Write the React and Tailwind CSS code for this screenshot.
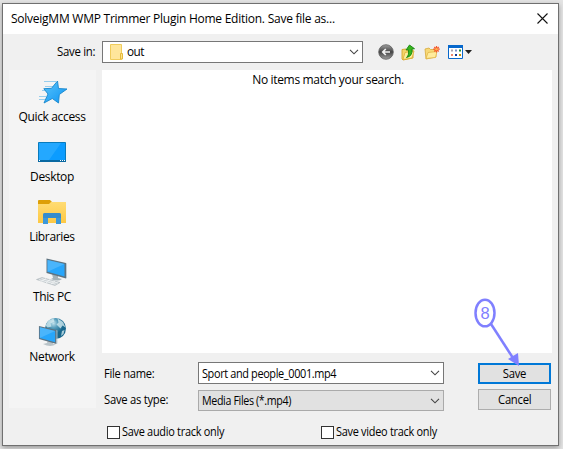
import React from "react";

function Chevron() {
  return (
    <svg width="10" height="6" viewBox="0 0 10 6" fill="none" stroke="#444" strokeWidth="1.1" className="shrink-0">
      <path d="M1 .8 5 4.8 9 .8" />
    </svg>
  );
}

function StarIcon() {
  return (
    <svg width="32" height="32" viewBox="0 0 32 32">
      <defs>
        <linearGradient id="star" x1="0" y1="0" x2="1" y2="1">
          <stop offset="0" stopColor="#5cc4f8" />
          <stop offset="1" stopColor="#0c94f5" />
        </linearGradient>
      </defs>
      <path d="M8 5.500H20M9 10.500H18M6 14.500H12M3 20.500H10M3 23.500H9" stroke="#8dc9ec" strokeWidth=".9" />
      <path d="M21.500 5 22.500 12.500 31 13 23.300 18.500 22.500 27 16.300 22.500 8 27 12 18 7.800 12.700 15.500 12.300Z" fill="url(#star)" stroke="#1787cc" strokeWidth=".9" />
    </svg>
  );
}

function DesktopIcon() {
  return (
    <svg width="32" height="32" viewBox="0 0 32 32">
      <path d="M2.500 6.500h27v19h-27z" fill="#0c9cff" stroke="#087bbd" />
      <path d="M3 24V7h22L13 24z" fill="#35b0ff" opacity=".6" />
      <path d="M2 24h28v2H2z" fill="#0969a2" />
      <path d="M3 24.500h1M24 24.500h1M26 24.500h1M28 24.500h1" stroke="#fff" />
    </svg>
  );
}

function LibrariesIcon() {
  return (
    <svg width="32" height="32" viewBox="0 0 32 32">
      <defs>
        <linearGradient id="folder" x1="0" y1="0" x2="0" y2="1">
          <stop offset="0" stopColor="#ffdc74" />
          <stop offset="1" stopColor="#fdc843" />
        </linearGradient>
      </defs>
      <path d="M2 5Q2 4 3 4H14L16 6 14 9H2z" fill="#dd9f07" />
      <path d="M2 8H13L15 6H30V27H2z" fill="url(#folder)" />
      <path d="M7 28V19Q7 17 9 17H23Q25 17 25 19V28H20V22H12V28z" fill="#3d98d9" />
      <path d="M7 22V19Q7 17 9 17H23Q25 17 25 19V22z" fill="#348ccd" />
    </svg>
  );
}

function Monitor() {
  return (
    <>
      <path d="M.5.500 20 5V20.500L.5 15z" fill="#5e7380" />
      <path d="M1.500 2 18.500 6V18.500L1.500 13.800z" fill="#27a6fb" />
      <path d="M1.500 2 18.500 6 1.500 13.800z" fill="#62c0fc" opacity=".6" />
      <path d="M20 5 21 5.500V20L20 20.500z" fill="#bccbd3" />
    </>
  );
}

function PcIcon() {
  return (
    <svg width="32" height="32" viewBox="0 0 32 32">
      <path d="M16 18 22 20V22L26 23Q22 26 15 23l2-1z" fill="#a3b1b8" />
      <g transform="translate(10 2)"><Monitor /></g>
      <path d="M.5 23.500 6 21.500 24 26.500 19 29.500z" fill="#c9d0d3" stroke="#a3adb2" strokeWidth=".5" />
      <path d="M3 23.700 19.500 28.200M5.500 22.600 22 27M5.500 25.500 10 22.500M10 27 14 23.500M15 28 19 25" stroke="#f3f5f6" strokeWidth=".8" />
    </svg>
  );
}

function NetworkIcon() {
  return (
    <svg width="32" height="32" viewBox="0 0 32 32">
      <defs>
        <radialGradient id="globe" cx=".4" cy=".25">
          <stop offset="0" stopColor="#c1e2ec" />
          <stop offset=".45" stopColor="#569dbb" />
          <stop offset="1" stopColor="#17678d" />
        </radialGradient>
      </defs>
      <circle cx="19.500" cy="12.500" r="10.500" fill="url(#globe)" />
      <path d="M9.500 9.500 12.500 4.500 17.500 2.500 18.500 5.500 14.500 7.500 15.500 10.500 11.500 11.500zM21.500 2.500 27 6 29.500 11.500 26.500 9.500 24.500 12.500 20.500 8.500 22.500 6.500zM26 15 28.500 14 27.500 18 25 20z" fill="#d8edf2" opacity=".75" />
      <path d="M12 24 17 26V28L20 28.500Q14 31.500 7 28l4-1z" fill="#b8c3c8" />
      <g transform="translate(2.500 9.500) scale(.9)"><Monitor /></g>
    </svg>
  );
}

function SmallFolder() {
  return (
    <svg width="14" height="16" viewBox="0 0 14 16" className="shrink-0">
      <path d="M.5.500h11v15H.5z" fill="#ffe69b" stroke="#f0cc5b" />
      <path d="M10.500 9.500h2v5.500h-2z" fill="#ffe48b" stroke="#e4b93d" />
    </svg>
  );
}

function BackIcon() {
  return (
    <svg width="16" height="16" viewBox="0 0 16 16">
      <defs>
        <linearGradient id="back" x1="0" y1="0" x2="0" y2="1">
          <stop offset="0" stopColor="#a0a0a0" />
          <stop offset=".5" stopColor="#444" />
          <stop offset="1" stopColor="#a0a0a0" />
        </linearGradient>
      </defs>
      <circle cx="8" cy="8" r="7.300" fill="url(#back)" stroke="#606060" strokeWidth=".8" />
      <path d="M12 8H4.800M7.800 5 4.800 8 7.800 11" fill="none" stroke="#f4f4f4" strokeWidth="1.700" />
    </svg>
  );
}

function UpIcon() {
  return (
    <svg width="15" height="17" viewBox="0 0 15 17">
      <path d="M1 5.500 5 5 6 6.500 12 6V14L2 16 1 15z" fill="#f4d469" stroke="#d4a62c" strokeWidth=".9" />
      <path d="M2 15.500 4 8.500 13 7 11 14z" fill="#ffee9e" stroke="#dcae34" strokeWidth=".8" />
      <path d="M5.500 13.500Q8.500 11 7.200 5.500L5 6 8.500 1 13.500 4.700 11 5Q12 12 5.500 13.500Z" fill="#38b51e" stroke="#15860e" strokeWidth=".9" />
    </svg>
  );
}

function NewFolderIcon() {
  return (
    <svg width="16" height="15" viewBox="0 0 16 15">
      <path d="M1 4 5 3 6.500 4.500 12 4.500V12L2 14z" fill="#f7d978" stroke="#d8aa39" strokeWidth=".8" />
      <path d="M2 13.500 4 7.500 13 6.500 11.500 12.500z" fill="#ffec9d" stroke="#e1b548" strokeWidth=".8" />
      <path d="M12.500 1V7.500M9.200 4.200H15.800M10.300 2 14.700 6.500M14.700 2 10.300 6.500" stroke="#f5572c" strokeWidth="1.200" />
      <circle cx="12.500" cy="4.200" r="1.300" fill="#ffb14f" />
    </svg>
  );
}

function ViewIcon() {
  return (
    <svg width="24" height="14" viewBox="0 0 24 14">
      <path d="M.5.500h14v13H.5z" fill="#fff" stroke="#0868cc" />
      <path d="M0 0h15v3H0z" fill="#0868cc" />
      <path d="M3 4.500h2v2H3z" fill="#a7a0ad" /><path d="M7 4.500h2v2H7z" fill="#7c8eca" /><path d="M11 4.500h2v2h-2z" fill="#188e3a" />
      <path d="M3 9h2v2H3z" fill="#ef876c" /><path d="M7 9h2v2H7z" fill="#143a91" /><path d="M11 9h2v2h-2z" fill="#c5910a" />
      <path d="M17 5h7l-3.500 4z" fill="#222" />
    </svg>
  );
}

function Place({ icon, children }) {
  return (
    <div className="flex h-[60px] flex-col items-center">
      <div className="flex h-8 items-center justify-center">{icon}</div>
      <div className="mt-px h-4 whitespace-nowrap leading-4 tracking-[-0.35px]">{children}</div>
    </div>
  );
}

function Check({ children }) {
  return (
    <label className="flex items-center gap-0.5">
      <span className="size-[13px] shrink-0 border border-[#333] bg-white" />
      <span className="origin-left scale-x-[0.91] whitespace-nowrap tracking-[-0.3px]">{children}</span>
    </label>
  );
}

export default function App() {
  return (
    <div className="relative h-[449px] w-[563px] overflow-hidden bg-[#e4e4e4] pl-[2px] pt-[3px] font-['Open_Sans','Noto_Sans',sans-serif] text-[12px] leading-4 text-black">
      <div className="flex h-[443px] w-[557px] flex-col border border-[#707070] bg-[#f0f0f0] shadow-[0_2px_5px_#999]">
        <header className="flex h-[30px] shrink-0 items-center justify-between bg-white pl-2 pr-[10px]">
          <h1 className="whitespace-nowrap tracking-[-0.25px]">SolveigMM WMP Trimmer Plugin Home Edition. Save file as...</h1>
          <svg width="11" height="11" viewBox="0 0 11 11" stroke="#111" strokeWidth="1.1" className="-translate-y-px"><path d="M.5.500 10.500 10.500M10.500.500.500 10.500" /></svg>
        </header>
        <div className="flex h-9 shrink-0 items-center pl-[54px]">
          <span className="w-[45px] origin-left scale-x-95 whitespace-nowrap tracking-[-0.3px]">Save in:</span>
          <div className="flex h-[22px] w-[261px] items-center border border-[#777] bg-white pl-[7px] pr-[3px]">
            <SmallFolder />
            <span className="ml-[3px] flex-1 origin-left scale-x-[0.98] tracking-[-0.5px]">out</span>
            <Chevron />
          </div>
          <div className="ml-[15px] flex items-center">
            <BackIcon />
            <span className="ml-[7px]"><UpIcon /></span>
            <span className="ml-2"><NewFolderIcon /></span>
            <span className="ml-2"><ViewIcon /></span>
          </div>
        </div>
        <div className="flex flex-1 pl-[6px]">
          <aside className="h-[338px] w-[87px] shrink-0 bg-[#f4f4f4] pr-px pt-1.5">
            <Place icon={<StarIcon />}>Quick access</Place>
            <Place icon={<DesktopIcon />}>Desktop</Place>
            <Place icon={<LibrariesIcon />}>Libraries</Place>
            <Place icon={<PcIcon />}>This PC</Place>
            <Place icon={<NetworkIcon />}>Network</Place>
          </aside>
          <main className="ml-[6px] flex w-[450px] flex-col">
            <div className="h-[283px] shrink-0 bg-white pl-[2px] pt-[2px] text-center tracking-[-0.33px]">No items match your search.</div>
            <div className="flex pl-[2px] pt-[9px]">
              <div className="w-[94px] shrink-0 tracking-[-0.3px]">
                <div className="flex h-[22px] origin-left scale-x-[0.93] items-center pt-0.5">File name:</div>
                <div className="mt-1 flex h-[22px] origin-left scale-x-[0.94] items-center pt-0.5">Save as type:</div>
              </div>
              <div className="w-[246px] tracking-[-0.4px]">
                <div className="flex h-[22px] items-center justify-between border border-[#777] bg-white pl-[3px] pr-[3px]">
                  <span className="origin-left scale-x-[0.91] pt-px">Sport and people_0001.mp4</span><Chevron />
                </div>
                <div className="mt-[6px] flex h-[21px] items-center justify-between border border-[#aaa] bg-[#e1e1e1] pl-[3px] pr-[3px]">
                  <span className="origin-left scale-x-[0.89] pt-px">Media Files (*.mp4)</span><Chevron />
                </div>
              </div>
              <div className="ml-[34px] flex w-[73px] flex-col gap-[5px] pt-px tracking-[-0.3px]">
                <button className="h-[21px] border-2 border-[#0078d7] bg-[#e1e1e1] leading-[17px]"><span className="inline-block scale-x-[0.94]">Save</span></button>
                <button className="h-[21px] border border-[#adadad] bg-[#e1e1e1] leading-[19px]"><span className="inline-block scale-x-[0.94]">Cancel</span></button>
              </div>
            </div>
            <div className="mt-[13px] grid grid-cols-[214px_1fr] pl-[5px]">
              <Check>Save audio track only</Check>
              <Check>Save video track only</Check>
            </div>
          </main>
        </div>
      </div>
      <svg className="absolute left-[470px] top-[294px]" width="54" height="76" viewBox="0 0 54 76">
        <ellipse cx="15" cy="19" rx="9.500" ry="13.300" fill="none" stroke="#8080ff" strokeWidth="2.500" />
        <text x="15" y="24.500" textAnchor="middle" fontFamily="Liberation Sans" fontSize="16.500" fill="#8080ff">8</text>
        <path d="M21 30 43 64" stroke="#8080ff" strokeWidth="2.500" />
        <path d="M49 72 38 65 48 59z" fill="#8080ff" />
      </svg>
    </div>
  );
}
